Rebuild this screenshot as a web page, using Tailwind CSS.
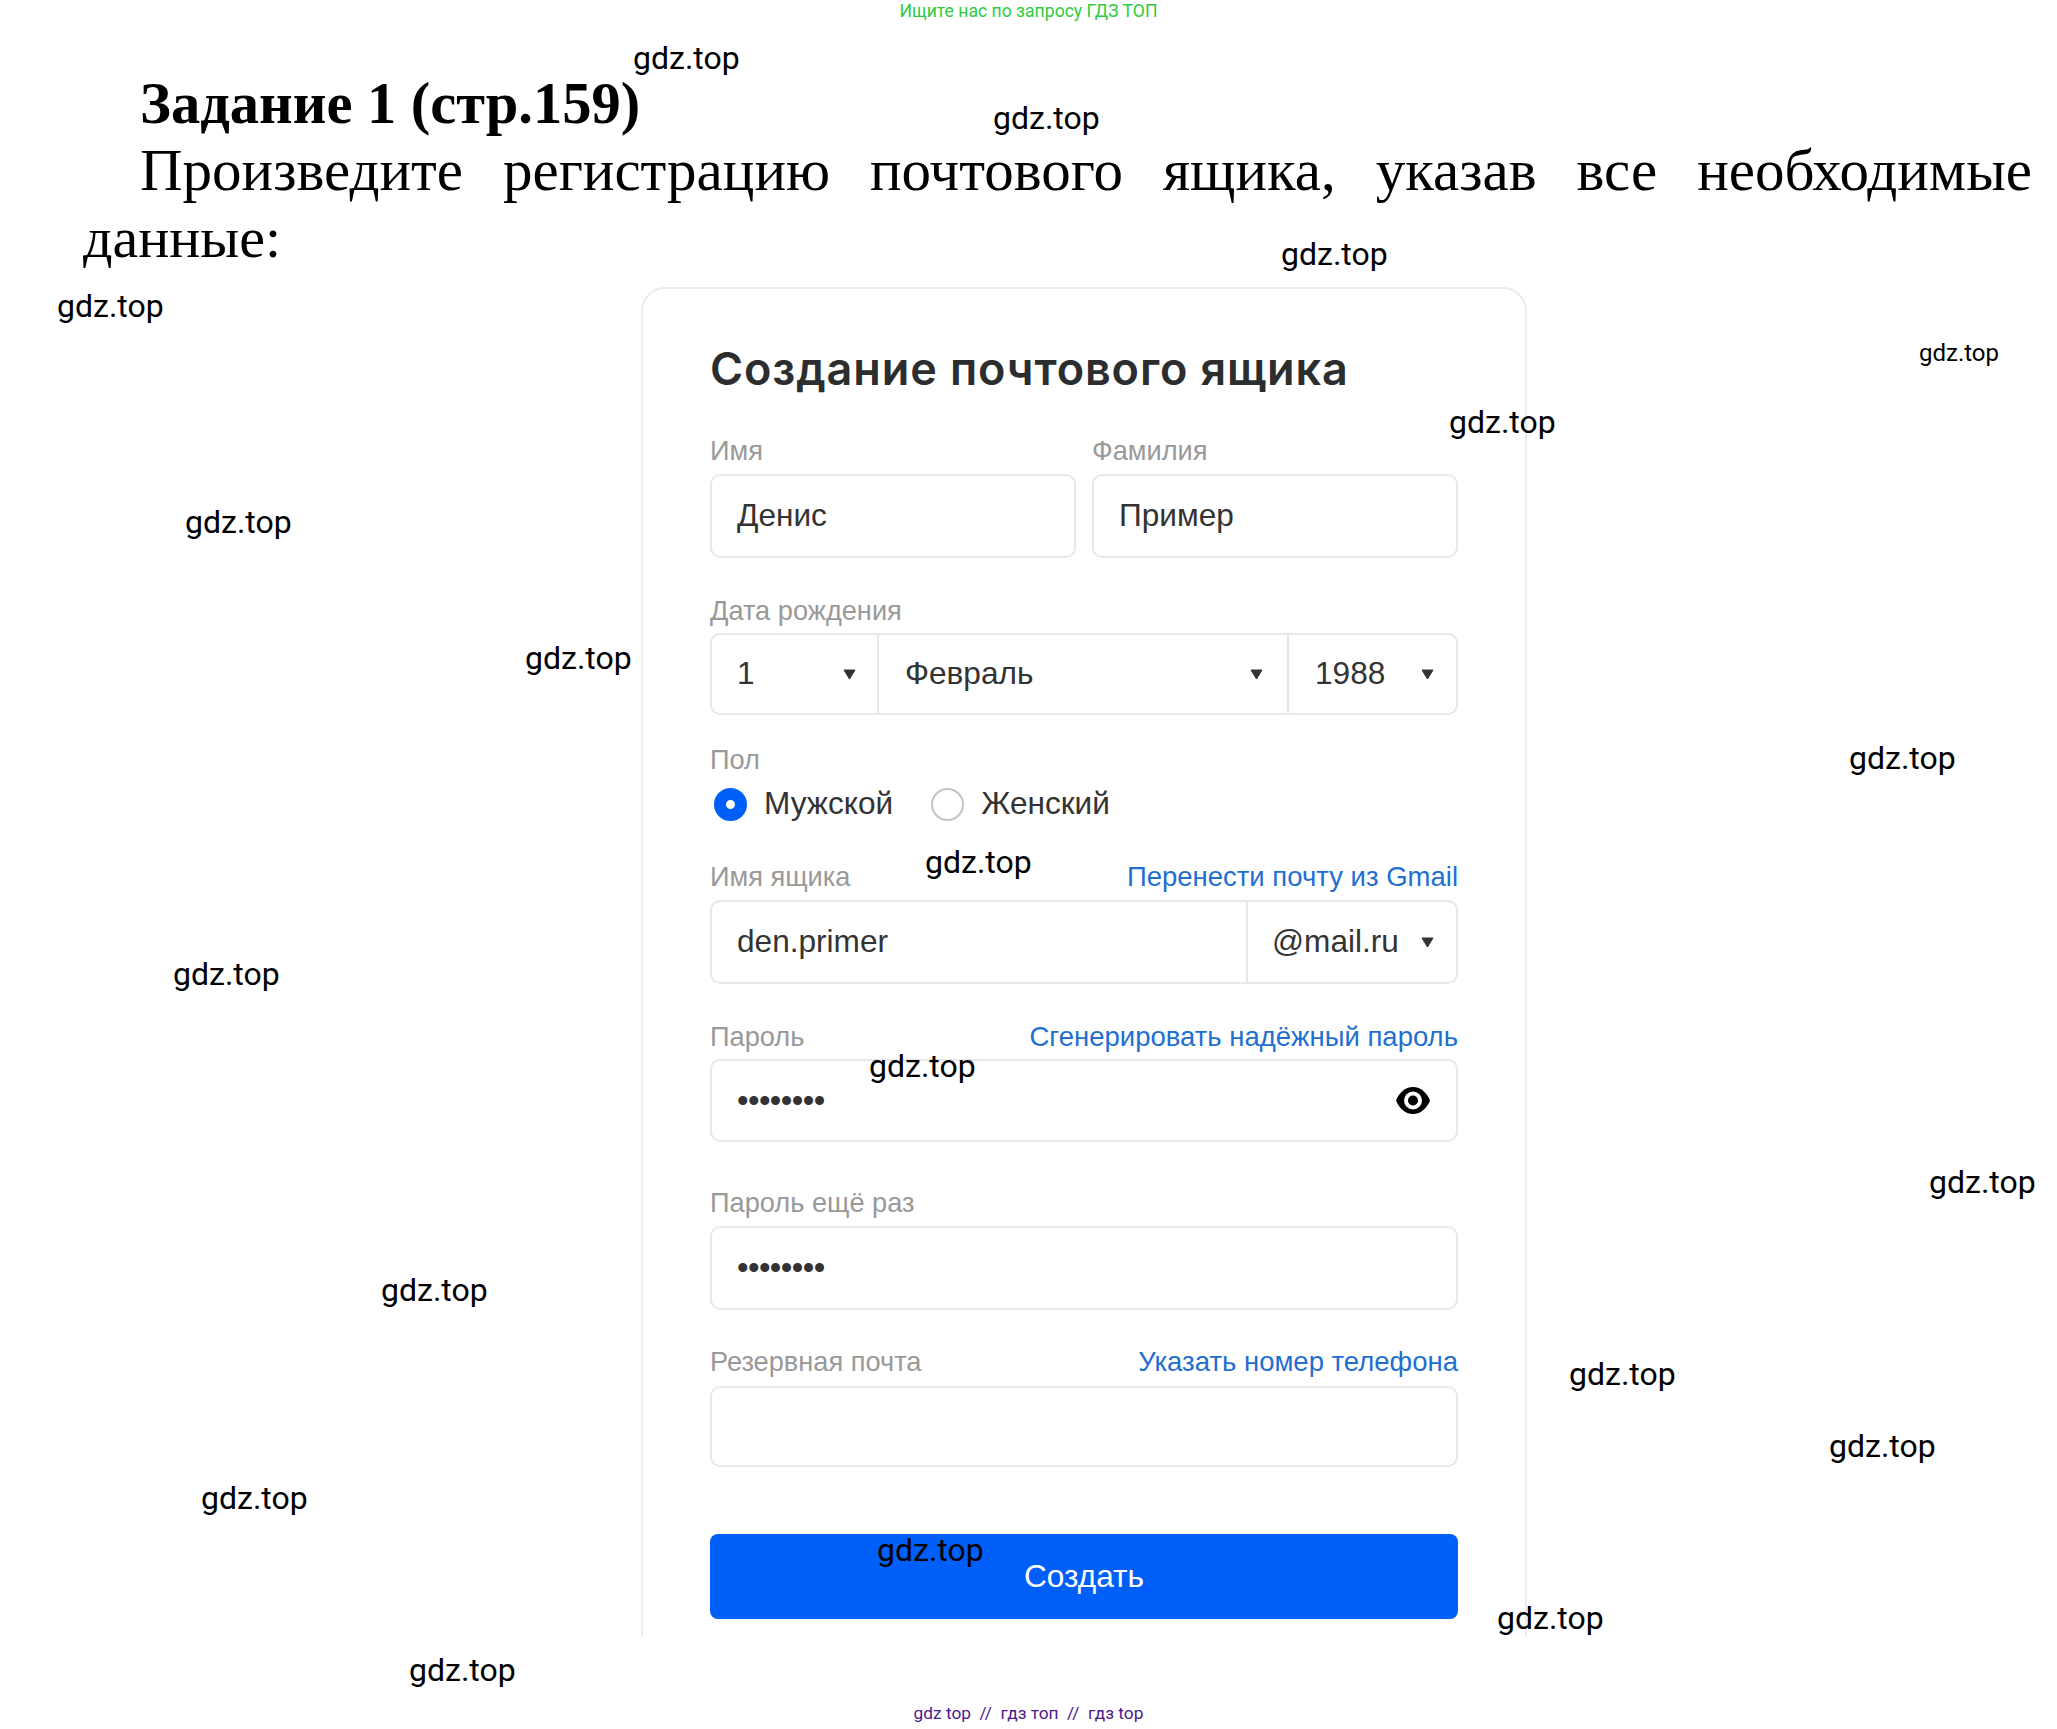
<!DOCTYPE html>
<html lang="ru">
  <head>
    <meta charset="UTF-8" />
    <title>Задание 1 (стр.159)</title>
    <script src="https://cdn.jsdelivr.net/npm/@tailwindcss/browser@4"></script>
  </head>
  <body class="bg-white">
    <div class="relative w-[2057px] h-[1729px] overflow-hidden bg-white font-['Roboto',sans-serif]">
      <!-- Top banner -->
      <p class="h-[20px] text-center text-[17.6px] leading-[22px] text-[#2ecc40]">Ищите нас по запросу ГДЗ ТОП</p>

      <!-- Task text -->
      <div class="font-['Liberation_Serif',serif] text-black">
        <h1 class="pl-[140px] pt-[52px] text-[58.500px] leading-[64px] font-bold">Задание 1 (стр.159)</h1>
        <p class="pl-[140px] pr-[25px] text-[59px] leading-[68px] text-justify [text-align-last:justify]">Произведите регистрацию почтового ящика, указав все необходимые</p>
        <p class="pl-[83px] text-[58px] leading-[68px]">данные:</p>
      </div>

      <!-- Signup card -->
      <div class="ml-[641px] mt-[15px] w-[886px] h-[1350px] rounded-t-[24px] border-[2px] border-b-0 border-[#ececec] pl-[67px] pr-[67px] pt-[52px] font-['Liberation_Sans',sans-serif] text-[#333]">
        <h2 class="font-['Inter',sans-serif] text-[45px] leading-[56px] font-semibold tracking-[0.9px] text-[#2c2d2e]">Создание почтового ящика</h2>

        <div class="mt-[38px] grid grid-cols-2 gap-[16px]">
          <div>
            <div class="text-[27.200px] leading-[32px] text-[#999]">Имя</div>
            <div class="mt-[7px] flex h-[84px] items-center rounded-[10px] border-[2px] border-[#e8e8e8] px-[25px] text-[31.600px]">Денис</div>
          </div>
          <div>
            <div class="text-[27.200px] leading-[32px] text-[#999]">Фамилия</div>
            <div class="mt-[7px] flex h-[84px] items-center rounded-[10px] border-[2px] border-[#e8e8e8] px-[25px] text-[31.600px]">Пример</div>
          </div>
        </div>

        <div class="mt-[37px] text-[27.200px] leading-[32px] text-[#999]">Дата рождения</div>
        <div class="mt-[6px] flex h-[82px] items-stretch rounded-[10px] border-[2px] border-[#e8e8e8] text-[31.600px]">
          <div class="flex w-[167px] items-center justify-between border-r-[2px] border-[#e8e8e8] pl-[25px] pr-[21px]">
            <span>1</span>
            <svg width="13" height="11" viewBox="0 0 13 11"><path d="M1 1h11L6.500 10z" fill="#333" stroke="#333" stroke-linejoin="round" /></svg>
          </div>
          <div class="flex w-[410px] items-center justify-between border-r-[2px] border-[#e8e8e8] pl-[26px] pr-[24px]">
            <span>Февраль</span>
            <svg width="13" height="11" viewBox="0 0 13 11"><path d="M1 1h11L6.500 10z" fill="#333" stroke="#333" stroke-linejoin="round" /></svg>
          </div>
          <div class="flex flex-1 items-center justify-between pl-[26px] pr-[22px]">
            <span>1988</span>
            <svg width="13" height="11" viewBox="0 0 13 11"><path d="M1 1h11L6.500 10z" fill="#333" stroke="#333" stroke-linejoin="round" /></svg>
          </div>
        </div>

        <div class="mt-[29px] text-[27.200px] leading-[32px] text-[#999]">Пол</div>
        <div class="mt-[6px] flex h-[44px] items-center pl-[4px] text-[31.600px]">
          <span class="h-[33px] w-[33px] rounded-full border-[12px] border-[#005ff9] bg-white"></span>
          <span class="ml-[17px]">Мужской</span>
          <span class="ml-[38px] h-[33px] w-[33px] rounded-full border-[2px] border-[#c4c4c4] bg-white"></span>
          <span class="ml-[17px]">Женский</span>
        </div>

        <div class="mt-[35px] flex items-center justify-between text-[27.200px] leading-[32px]">
          <span class="text-[#999]">Имя ящика</span>
          <a class="text-[27.500px] text-[#1f6fd0]">Перенести почту из Gmail</a>
        </div>
        <div class="mt-[7px] flex h-[84px] items-stretch rounded-[10px] border-[2px] border-[#e8e8e8] text-[31.600px]">
          <div class="flex w-[536px] items-center border-r-[2px] border-[#e8e8e8] pl-[25px]">den.primer</div>
          <div class="flex flex-1 items-center justify-between pl-[24px] pr-[22px]">
            <span>@mail.ru</span>
            <svg width="13" height="11" viewBox="0 0 13 11"><path d="M1 1h11L6.500 10z" fill="#333" stroke="#333" stroke-linejoin="round" /></svg>
          </div>
        </div>

        <div class="mt-[37px] flex items-center justify-between text-[27.200px] leading-[32px]">
          <span class="text-[#999]">Пароль</span>
          <a class="text-[27.500px] text-[#1f6fd0]">Сгенерировать надёжный пароль</a>
        </div>
        <div class="mt-[6px] flex h-[83px] items-center justify-between rounded-[10px] border-[2px] border-[#e8e8e8] pl-[25px] pr-[26px]">
          <span class="text-[33px] tracking-[-0.6px]">••••••••</span>
          <svg width="34" height="27" viewBox="0 0 34 27"><path d="M17 0C9 0 3 6 0 13.500C3 21 9 27 17 27s14-6 17-13.500C31 6 25 0 17 0z" fill="#000" /><circle cx="17" cy="13.500" r="9" fill="#fff" /><circle cx="17" cy="13.500" r="5" fill="#000" /></svg>
        </div>

        <div class="mt-[45px] text-[27.200px] leading-[32px] text-[#999]">Пароль ещё раз</div>
        <div class="mt-[7px] flex h-[84px] items-center rounded-[10px] border-[2px] border-[#e8e8e8] pl-[25px]">
          <span class="text-[33px] tracking-[-0.6px]">••••••••</span>
        </div>

        <div class="mt-[36px] flex items-center justify-between text-[27.200px] leading-[32px]">
          <span class="text-[#999]">Резервная почта</span>
          <a class="text-[27.500px] text-[#1f6fd0]">Указать номер телефона</a>
        </div>
        <div class="mt-[8px] h-[81px] rounded-[10px] border-[2px] border-[#e8e8e8]"></div>

        <button class="mt-[67px] flex h-[85px] w-full items-center justify-center rounded-[8px] bg-[#005ff9] text-[31.600px] text-white">Создать</button>
      </div>

      <!-- Bottom banner -->
      <p class="absolute bottom-[6px] left-0 w-full text-center text-[17.300px] leading-[20px] text-[#4b1a8c]">gdz top&nbsp; //&nbsp; гдз топ&nbsp; //&nbsp; гдз top</p>

      <!-- Watermarks scattered over the page -->
      <span class="absolute left-[633px] top-[39px] text-[32px] leading-[38px] text-black">gdz.top</span>
      <span class="absolute left-[993px] top-[99px] text-[32px] leading-[38px] text-black">gdz.top</span>
      <span class="absolute left-[1281px] top-[235px] text-[32px] leading-[38px] text-black">gdz.top</span>
      <span class="absolute left-[57px] top-[287px] text-[32px] leading-[38px] text-black">gdz.top</span>
      <span class="absolute left-[1919px] top-[338px] text-[24px] leading-[30px] text-black">gdz.top</span>
      <span class="absolute left-[1449px] top-[403px] text-[32px] leading-[38px] text-black">gdz.top</span>
      <span class="absolute left-[185px] top-[503px] text-[32px] leading-[38px] text-black">gdz.top</span>
      <span class="absolute left-[525px] top-[639px] text-[32px] leading-[38px] text-black">gdz.top</span>
      <span class="absolute left-[1849px] top-[739px] text-[32px] leading-[38px] text-black">gdz.top</span>
      <span class="absolute left-[925px] top-[843px] text-[32px] leading-[38px] text-black">gdz.top</span>
      <span class="absolute left-[173px] top-[955px] text-[32px] leading-[38px] text-black">gdz.top</span>
      <span class="absolute left-[869px] top-[1047px] text-[32px] leading-[38px] text-black">gdz.top</span>
      <span class="absolute left-[1929px] top-[1163px] text-[32px] leading-[38px] text-black">gdz.top</span>
      <span class="absolute left-[381px] top-[1271px] text-[32px] leading-[38px] text-black">gdz.top</span>
      <span class="absolute left-[1569px] top-[1355px] text-[32px] leading-[38px] text-black">gdz.top</span>
      <span class="absolute left-[1829px] top-[1427px] text-[32px] leading-[38px] text-black">gdz.top</span>
      <span class="absolute left-[201px] top-[1479px] text-[32px] leading-[38px] text-black">gdz.top</span>
      <span class="absolute left-[877px] top-[1531px] text-[32px] leading-[38px] text-black">gdz.top</span>
      <span class="absolute left-[1497px] top-[1599px] text-[32px] leading-[38px] text-black">gdz.top</span>
      <span class="absolute left-[409px] top-[1651px] text-[32px] leading-[38px] text-black">gdz.top</span>
    </div>
  </body>
</html>
